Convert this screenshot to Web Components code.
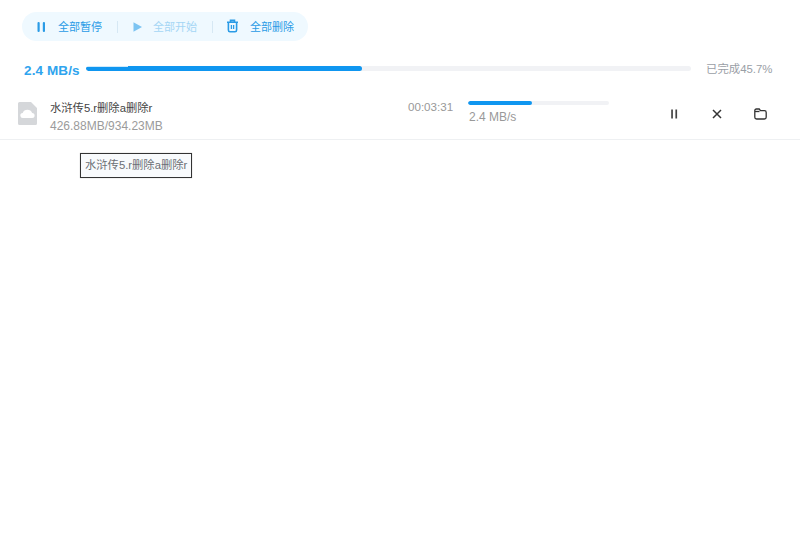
<!DOCTYPE html>
<html lang="zh"><head><meta charset="utf-8"><style>
html,body{margin:0;height:100%;background:#fff}
body{font-family:"Liberation Sans","Noto Sans CJK SC",sans-serif}
</style></head><body>
<dl-page></dl-page>
<template id="t-page"><style>
:host{display:block;width:800px;height:553px;position:relative;overflow:hidden;padding-top:12px;box-sizing:border-box}
.tip{position:absolute;left:80px;top:153px;width:112px;height:25px;box-sizing:border-box;border:1px solid #333;background:#f8fafc;color:#6b6f75;font-size:11.3px;line-height:23px;padding-left:4px;white-space:nowrap;box-shadow:0 0 1px rgba(0,0,0,.3)}
</style>
<dl-toolbar></dl-toolbar><dl-summary></dl-summary><dl-row></dl-row>
<div class="tip">水浒传5.r删除a删除r</div></template>

<template id="t-toolbar"><style>
:host{display:flex;align-items:center;width:286px;height:29px;margin-left:22px;border-radius:15px;background:#eff9ff;box-sizing:border-box;color:#2a9be6;font-size:11px}
.b{display:flex;align-items:center;white-space:nowrap}
.b svg{display:block;flex:none}
.l{margin-top:-2px}
.sep{width:1px;height:12px;background:#d6e8f4;flex:none}
.off{color:#a5d6f5}
</style>
<span class="b" style="margin-left:14px"><svg width="12" height="12" viewBox="0 0 12 12" fill="#2a9be6"><rect x="1.500" y="1" width="2.200" height="10" rx="1"/><rect x="6.800" y="1" width="2.200" height="10" rx="1"/></svg><span class="l" style="margin-left:10px">全部暂停</span></span>
<span class="sep" style="margin-left:15px"></span>
<span class="b off" style="margin-left:15px"><svg width="10" height="12" viewBox="0 0 10 12" fill="#7cc4f2"><path d="M.5 1.200 9 6 .5 10.800z"/></svg><span class="l" style="margin-left:10px">全部开始</span></span>
<span class="sep" style="margin-left:15px"></span>
<span class="b" style="margin-left:13px"><svg style="margin-top:-2px" width="13" height="14" viewBox="0 0 13 14" fill="none" stroke="#2a9be6" stroke-width="1.600"><path d="M1 3.200h11M4.500 3V1.400h4V3M2.400 3.200v7.900c0 1 .7 1.700 1.600 1.700h5c.9 0 1.600-.7 1.600-1.700V3.200"/><path d="M5.400 6v4M7.600 6v4" stroke-width="1.300"/></svg><span class="l" style="margin-left:11px">全部删除</span></span></template>

<template id="t-summary"><style>
:host{display:flex;align-items:center;height:20px;margin-top:18px;padding-left:24px;font-size:13px}
.s{width:62px;flex:none;color:#2fa4ee;font-weight:bold;font-size:13.500px;letter-spacing:.12px;white-space:nowrap;padding-top:2px;box-sizing:border-box}
.p{width:605px;flex:none;margin-top:-1px;--top:linear-gradient(#cfeafc,#cfeafc) 0 0/42px 1px no-repeat}
.d{margin-left:15px;color:#9a9ea6;font-size:11.400px;white-space:nowrap;margin-top:-3px}
</style><span class="s">2.4 MB/s</span><dl-bar class="p" style="--h:5px" pct="45.7"></dl-bar><span class="d">已完成45.7%</span></template>

<template id="t-bar"><style>
:host{display:block;height:var(--h,4px);border-radius:3px;background:#f1f2f5;overflow:hidden}
i{display:block;height:100%;border-radius:3px;background:var(--top,none),#0f96f0}
</style><i></i></template>

<template id="t-row"><style>
:host{display:flex;align-items:flex-start;height:51px;margin-top:9px;border-bottom:1px solid #eef0f2;box-sizing:content-box;position:relative;white-space:nowrap}
.ic{margin:14px 0 0 18px;flex:none;display:block}
.n{margin-left:13px;width:358px;flex:none;margin-right:0}
.t{font-size:11.300px;color:#444;line-height:16px;margin-top:12px}
.z{font-size:12px;color:#9b9b9b;line-height:16px;margin-top:2px}
.time{font-size:11.600px;color:#999;width:60px;flex:none;line-height:16px;margin-top:11px}
.m{width:141px;flex:none;margin-top:13px}
.sp{font-size:12px;color:#999;line-height:16px;margin:4px 0 0 1px}
.a{display:flex;margin-left:59px;margin-top:20px}
.a svg{display:block;flex:none}
</style>
<svg class="ic" width="19" height="23" viewBox="0 0 19 23"><path d="M1.500 0H13l6 6v15.500a1.500 1.500 0 0 1-1.500 1.500h-16A1.500 1.500 0 0 1 0 21.500v-20A1.500 1.500 0 0 1 1.500 0z" fill="#d5d7da"/><path d="M5 16a2.500 2.500 0 0 1-.3-5A5 5 0 0 1 14.100 11a2.500 2.500 0 0 1 0 5z" fill="#fff"/></svg>
<div class="n"><div class="t">水浒传5.r删除a删除r</div><div class="z">426.88MB/934.23MB</div></div>
<div class="time">00:03:31</div>
<div class="m"><dl-bar style="--h:4px" pct="45.7"></dl-bar><div class="sp">2.4 MB/s</div></div>
<div class="a">
<svg width="12" height="12" viewBox="0 0 12 12" fill="#444"><rect x="3.200" y="1.500" width="1.700" height="9"/><rect x="7.400" y="1.500" width="1.700" height="9"/></svg>
<svg style="margin-left:31px" width="12" height="12" viewBox="0 0 12 12" stroke="#333" stroke-width="1.500" fill="none"><path d="M2 2l8 8M10 2l-8 8"/></svg>
<svg style="margin-left:31px" width="13" height="12" viewBox="0 0 13 12" stroke="#333" stroke-width="1.300" fill="none"><path d="M.8 3.400V2.600C.8 1.600 1.400 1 2.400 1h2.800l1.300 1.700h4c1 0 1.700.7 1.700 1.700v4.800c0 1.100-.7 1.800-1.800 1.800H2.600C1.500 11 .8 10.300.8 9.200z"/><path d="M1 3.500h4.500"/></svg>
</div></template>

<script>
function def(n,tid,init){customElements.define(n,class extends HTMLElement{connectedCallback(){if(this.shadowRoot)return;const r=this.attachShadow({mode:'open'});r.appendChild(document.getElementById(tid).content.cloneNode(true));init&&init(this,r)}})}
def('dl-page','t-page');def('dl-toolbar','t-toolbar');def('dl-summary','t-summary');def('dl-row','t-row');
def('dl-bar','t-bar',(h,r)=>{r.querySelector('i').style.width=h.getAttribute('pct')+'%'});
</script></body></html>
